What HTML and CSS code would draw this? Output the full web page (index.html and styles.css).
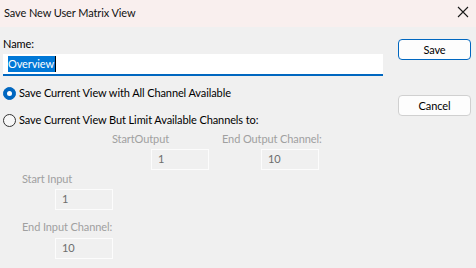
FILE: index.html
```html
<!DOCTYPE html>
<html>
<head>
<meta charset="utf-8">
<link rel="stylesheet" href="styles.css">
</head>
<body>
<div class="window">
  <div class="titlebar">
    <span class="title">Save New User Matrix View</span>
    <svg class="close" width="12" height="12" viewBox="0 0 12 12"><path d="M1 1 L11 11 M11 1 L1 11" stroke="#1a1a1a" stroke-width="1.1" fill="none"/></svg>
  </div>
  <div class="content">
    <div class="main">
      <div class="label">Name:</div>
      <div class="textfield"><span class="sel">Overview</span><span class="caret"></span></div>
      <div class="radio-row first">
        <span class="radio checked"><span class="dot"></span></span>
        <span>Save Current View with All Channel Available</span>
      </div>
      <div class="radio-row second">
        <span class="radio"></span>
        <span>Save Current View But Limit Available Channels to:</span>
      </div>
      <div class="out-row">
        <div class="group g1">
          <div class="glabel">StartOutput</div>
          <div class="box out">1</div>
        </div>
        <div class="group">
          <div class="glabel">End Output Channel:</div>
          <div class="box out">10</div>
        </div>
      </div>
      <div class="in-col">
        <div class="glabel">Start Input</div>
        <div class="box in">1</div>
        <div class="glabel gap">End Input Channel:</div>
        <div class="box in end">10</div>
      </div>
    </div>
    <div class="buttons">
      <button class="btn primary">Save</button>
      <button class="btn cancel">Cancel</button>
    </div>
  </div>
</div>
</body>
</html>
```
FILE: styles.css
```css
html, body {
  margin: 0;
  padding: 0;
}
body {
  width: 476px;
  height: 268px;
  overflow: hidden;
  background: #f0f0f0;
  font-family: Lato, "Liberation Sans", sans-serif;
  font-size: 11px;
  letter-spacing: -0.1px;
  color: #000;
}
.window {
  width: 476px;
  height: 268px;
  display: flex;
  flex-direction: column;
}
.titlebar {
  height: 27px;
  background: #f9efee;
  display: flex;
  align-items: center;
  justify-content: space-between;
  padding: 0 7px 0 4px;
  box-sizing: border-box;
}
.title {
  line-height: 16px;
  margin-top: -2px;
  color: #111;
}
.close {
  margin-top: -4px;
}
.content {
  display: flex;
  padding: 9px 0 0 3px;
}
.main {
  width: 380px;
  display: flex;
  flex-direction: column;
}
.label {
  line-height: 16px;
}
.textfield {
  margin-top: 2px;
  height: 22px;
  background: #fff;
  border-bottom: 2px solid #0067c0;
  box-sizing: border-box;
  padding: 2px 0 0 5px;
  display: flex;
  align-items: flex-start;
  line-height: 16px;
}
.sel {
  background: #0078d7;
  color: #fff;
  padding-right: 1px;
}
.caret {
  width: 1px;
  height: 16px;
  background: #000;
}
.radio-row {
  display: flex;
  align-items: center;
  height: 16px;
  line-height: 16px;
  gap: 3px;
}
.radio-row.first {
  margin-top: 9px;
}
.radio-row.second {
  margin-top: 11px;
}
.radio {
  width: 13px;
  height: 13px;
  border-radius: 50%;
  border: 1px solid #333;
  box-sizing: border-box;
  display: flex;
  align-items: center;
  justify-content: center;
  background: #f7f7f7;
}
.radio.checked {
  background: #0067c0;
  border-color: #0067c0;
}
.dot {
  width: 5px;
  height: 5px;
  border-radius: 50%;
  background: #fff;
}
.out-row {
  display: flex;
  margin-top: 3px;
  padding-left: 109px;
}
.group {
  display: flex;
  flex-direction: column;
}
.g1 {
  width: 110px;
}
.glabel {
  color: #a0a0a0;
  line-height: 16px;
}
.box {
  box-sizing: border-box;
  height: 21px;
  width: 58px;
  border: 1px solid #fcfcfc;
  background: #f0f0f0;
  color: #6d6d6d;
  line-height: 17px;
  padding-left: 6px;
  margin-top: 2px;
}
.box.out {
  margin-left: 39px;
}
.in-col {
  display: flex;
  flex-direction: column;
  padding-left: 19px;
  margin-top: 1px;
}
.box.in {
  margin-left: 33px;
}
.box.end {
  margin-top: 3px;
}
.glabel.gap {
  margin-top: 9px;
}
.buttons {
  margin-left: 15px;
  display: flex;
  flex-direction: column;
  padding-top: 3px;
}
.btn {
  width: 73px;
  height: 21px;
  box-sizing: border-box;
  border-radius: 4px;
  background: #fdfdfd;
  font-family: inherit;
  font-size: 11px;
  letter-spacing: -0.1px;
  padding: 0;
  line-height: 17px;
  color: #000;
}
.btn.primary {
  border: 1px solid #0067c0;
}
.btn.cancel {
  margin-top: 35px;
  border: 1px solid #d0d0d0;
}
```
